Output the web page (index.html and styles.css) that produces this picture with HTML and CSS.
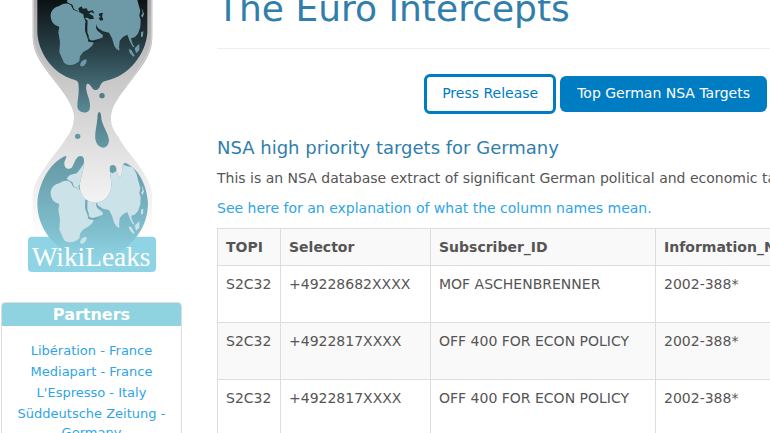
FILE: index.html
```
<!DOCTYPE html>
<html lang="en">
<head>
<meta charset="utf-8">
<title>The Euro Intercepts</title>
<link rel="stylesheet" href="styles.css">
</head>
<body>
<div class="page">
  <aside class="sidebar">
    <a class="logo" href="#">
      <svg viewBox="-12 0 453 819" role="img" aria-label="WikiLeaks">
        <defs>
          <linearGradient id="glass" x1="0" y1="0" x2="0" y2="1">
            <stop offset="0" stop-color="#a9a9a9"/>
            <stop offset=".35" stop-color="#c9c9c9"/>
            <stop offset=".75" stop-color="#ebebeb"/>
            <stop offset="1" stop-color="#fff"/>
          </linearGradient>
          <linearGradient id="night" x1="0" y1="0" x2="0" y2="1">
            <stop offset="0" stop-color="#0b1214"/>
            <stop offset=".5" stop-color="#2d474f"/>
            <stop offset="1" stop-color="#5a8b98"/>
          </linearGradient>
          <linearGradient id="drop" x1="0" y1="0" x2="0" y2="1">
            <stop offset="0" stop-color="#4d7884"/>
            <stop offset="1" stop-color="#6699a6"/>
          </linearGradient>
          <linearGradient id="day" x1="0" y1="0" x2="0" y2="1">
            <stop offset="0" stop-color="#6597a4"/>
            <stop offset=".75" stop-color="#80c0cf"/>
            <stop offset="1" stop-color="#8fd4e4"/>
          </linearGradient>
          <path id="globe" d="M52 610C55 550 90 485 138 467C142 472 132 482 133 490C133 510 151 510 157 500C165 485 168 469 182 468C196 470 192 485 190 505C184 535 178 550 179 565C183 593 205 608 227 608C255 606 273 585 274 555C274 530 265 503 272 497C280 493 288 495 290 510C291 527 298 533 304 527C309 515 303 493 315 489C350 500 381 550 384 610C384 702 308 776 218 776S52 702 52 610Z"/>
          <clipPath id="globe-clip"><use href="#globe"/></clipPath>
          <g id="land">
            <path d="M92 50C91 33 103 20 118 18C128 9 145 8 153 16L160 29L176 35L190 48L197 65L195 87L203 116L207 126L221 127C218 141 203 149 189 157L180 169L178 183C164 198 143 198 132 188L118 157L120 126L115 97L118 80C105 77 94 68 92 50Z"/>
            <path d="M140 3L150 -7L170 -12L180 -24L196 -48L240 -55L310 -45L323 -44L340 -29L350 -9L355 11L361 32L358 47L362 60L361 81L354 101L344 112L333 115L338 132L344 142L338 140L329 123L322 104L309 111L299 122L297 144L291 149L283 138L276 115L267 98L249 94L233 84L229 71L231 91L249 106L247 113L212 124L203 105L200 88L203 62L190 50L178 45L174 33L162 28L157 14L145 9Z"/>
            <path d="M180 196Q182 181 198 178Q204 185 192 197Q184 202 180 196ZM295 141L299 147L296 152L292 148ZM326 147L334 150L344 167L340 170L329 158ZM344 145L358 131L358 151L348 160ZM363 97L370 94L369 109L363 112ZM365 24L372 41L368 53L363 47L368 40Z"/>
            <path class="sea" d="M175 25L185 19L188 26L200 25L204 34L218 31L224 41L213 36L207 41L219 47L222 56L209 58L203 53L192 54L190 43L178 37ZM239 40L249 38L246 49L250 60L241 62L236 54L242 51L236 45ZM196 69L202 68L202 99L207 109L203 111L196 96ZM228 76L235 87L245 94L237 94L229 86ZM205 120L221 122L244 122L221 127L203 124Z"/>
          </g>
        </defs>
        <path fill="url(#glass)" d="M38 0V110C38 170 80 210 120 265C150 305 161 330 162 350C161 380 151 398 140 412C120 445 100 465 80 495C55 530 40 555 38 590V710H396V590C395 555 379 530 355 495C330 460 310 440 296 412C280 390 272 375 273 350C275 325 285 305 320 260C360 205 397 170 397 110V0Z"/>
        <path fill="none" stroke="#d5d2d2" stroke-width="3" d="M40 0V110C42 165 82 206 122 262M395 0V110C392 165 356 206 318 258"/>
        <path fill="url(#night)" d="M52 0V100C55 150 90 220 165 240C175 243 176 250 176 262C178 280 172 300 172 320C174 336 197 343 207 332C214 320 208 300 203 285C198 270 197 256 201 252C206 249 212 256 218 266C224 272 232 271 238 263C242 253 246 245 256 243C330 228 377 160 382 100V0Z"/>
        <use class="land-night" href="#land"/>
        <circle cx="246" cy="287" r="8" fill="#507c88"/>
        <circle cx="173" cy="409" r="8" fill="#6596a3"/>
        <path fill="url(#drop)" d="M238 336Q243 336 244 356C249 382 267 401 267 423Q264 443 248 443Q229 439 226 417C224 394 232 371 233 344Q234 336 238 336Z"/>
        <rect x="24" y="710" width="384" height="106" rx="12" fill="#8fd4e4"/>
        <use href="#globe" fill="url(#day)"/>
        <g clip-path="url(#globe-clip)">
          <use class="land-day" href="#land" y="532"/>
          <path fill="#6b9eab" d="M266 490H292L288 514L278 520L270 516ZM306 486L318 486L334 500L322 499L310 494Z"/>
        </g>
        <text class="logo-name" x="35" y="799">WikiLeaks</text>
      </svg>
    </a>
    <section class="panel">
      <h2 class="panel-title">Partners</h2>
      <ul class="partners">
        <li><a href="#">Libération - France</a></li>
        <li><a href="#">Mediapart - France</a></li>
        <li><a href="#">L'Espresso - Italy</a></li>
        <li><a href="#">Süddeutsche Zeitung - Germany</a></li>
      </ul>
    </section>
  </aside>
  <main class="content">
    <h1 class="title">The Euro Intercepts</h1>
    <nav class="tabs">
      <a class="tab tab-outline" href="#">Press Release</a>
      <a class="tab" href="#">Top German NSA Targets</a>
    </nav>
    <h2 class="subtitle">NSA high priority targets for Germany</h2>
    <p class="text">This is an NSA database extract of significant German political and economic targets.</p>
    <p class="text"><a href="#">See here for an explanation of what the column names mean.</a></p>
    <table class="targets">
      <colgroup><col class="col-topi"><col class="col-selector"><col class="col-subscriber"><col></colgroup>
      <thead>
        <tr><th>TOPI</th><th>Selector</th><th>Subscriber_ID</th><th>Information_Need</th></tr>
      </thead>
      <tbody>
        <tr><td>S2C32</td><td>+49228682XXXX</td><td>MOF ASCHENBRENNER</td><td>2002-388*</td></tr>
        <tr><td>S2C32</td><td>+4922817XXXX</td><td>OFF 400 FOR ECON POLICY</td><td>2002-388*</td></tr>
        <tr><td>S2C32</td><td>+4922817XXXX</td><td>OFF 400 FOR ECON POLICY</td><td>2002-388*</td></tr>
      </tbody>
    </table>
  </main>
</div>
</body>
</html>
```
FILE: styles.css
```
* { box-sizing: border-box; }
html { overflow: hidden; }
body {
  margin: 0;
  background: #fff;
  color: #555;
  font: 14px/20px "DejaVu Sans", sans-serif;
}
a { color: #2fa4e7; text-decoration: none; }

.page { display: flex; gap: 35px; }

.sidebar { flex: 0 0 182px; padding-left: 1px; }
.logo { display: block; }
.logo svg { display: block; width: 151px; margin: 0 auto 29px; }
.logo-name { fill: #fff; font: 82px "Liberation Serif", serif; }
.land-night { fill: #6d9aa6; --sea: #16262b; }
.land-day { fill: #cae2e8; --sea: #70a8b6; }
.sea { fill: var(--sea); }

.panel { border: 1px solid #ddd; border-radius: 4px; overflow: hidden; }
.panel-title {
  margin: 0;
  padding: 2px 0 1px;
  background: #8fd2e0;
  color: #fff;
  font-size: 16px;
  line-height: 20px;
  text-align: center;
}
.partners {
  margin: 0;
  padding: 15px 10px;
  list-style: none;
  font-size: 13px;
  line-height: 19px;
  text-align: center;
}
.partners li { margin-bottom: 2px; }

.content { flex: 1; min-width: 0; white-space: nowrap; }
.title {
  margin: 0 0 25px;
  padding-bottom: 30px;
  border-bottom: 1px solid #eee;
  color: #317eac;
  font-size: 36px;
  font-weight: 400;
  line-height: 18px;
}
.tabs { display: flex; align-items: center; justify-content: flex-end; gap: 4px; padding-right: 3px; }
.tab {
  padding: 7px 17px 9px;
  border-radius: 6px;
  background: #007cc3;
  color: #fff;
}
.tab-outline {
  padding: 6px 15px 8px;
  border: 3px solid #007cc3;
  background: #fff;
  color: #007cc3;
}
.subtitle { margin: 24px 0 10px; color: #317eac; font-size: 18px; font-weight: 400; line-height: 20px; }
.text { margin: 0 0 10px; }

.targets { width: 100%; min-width: 600px; border-collapse: collapse; table-layout: fixed; }
.col-topi { width: 63px; }
.col-selector { width: 150px; }
.col-subscriber { width: 225px; }
.targets th, .targets td {
  padding: 8px;
  border: 1px solid #ddd;
  text-align: left;
  vertical-align: top;
}
.targets td { height: 57px; }
.targets thead tr, .targets tbody tr:nth-child(even) { background: #f9f9f9; }
```
